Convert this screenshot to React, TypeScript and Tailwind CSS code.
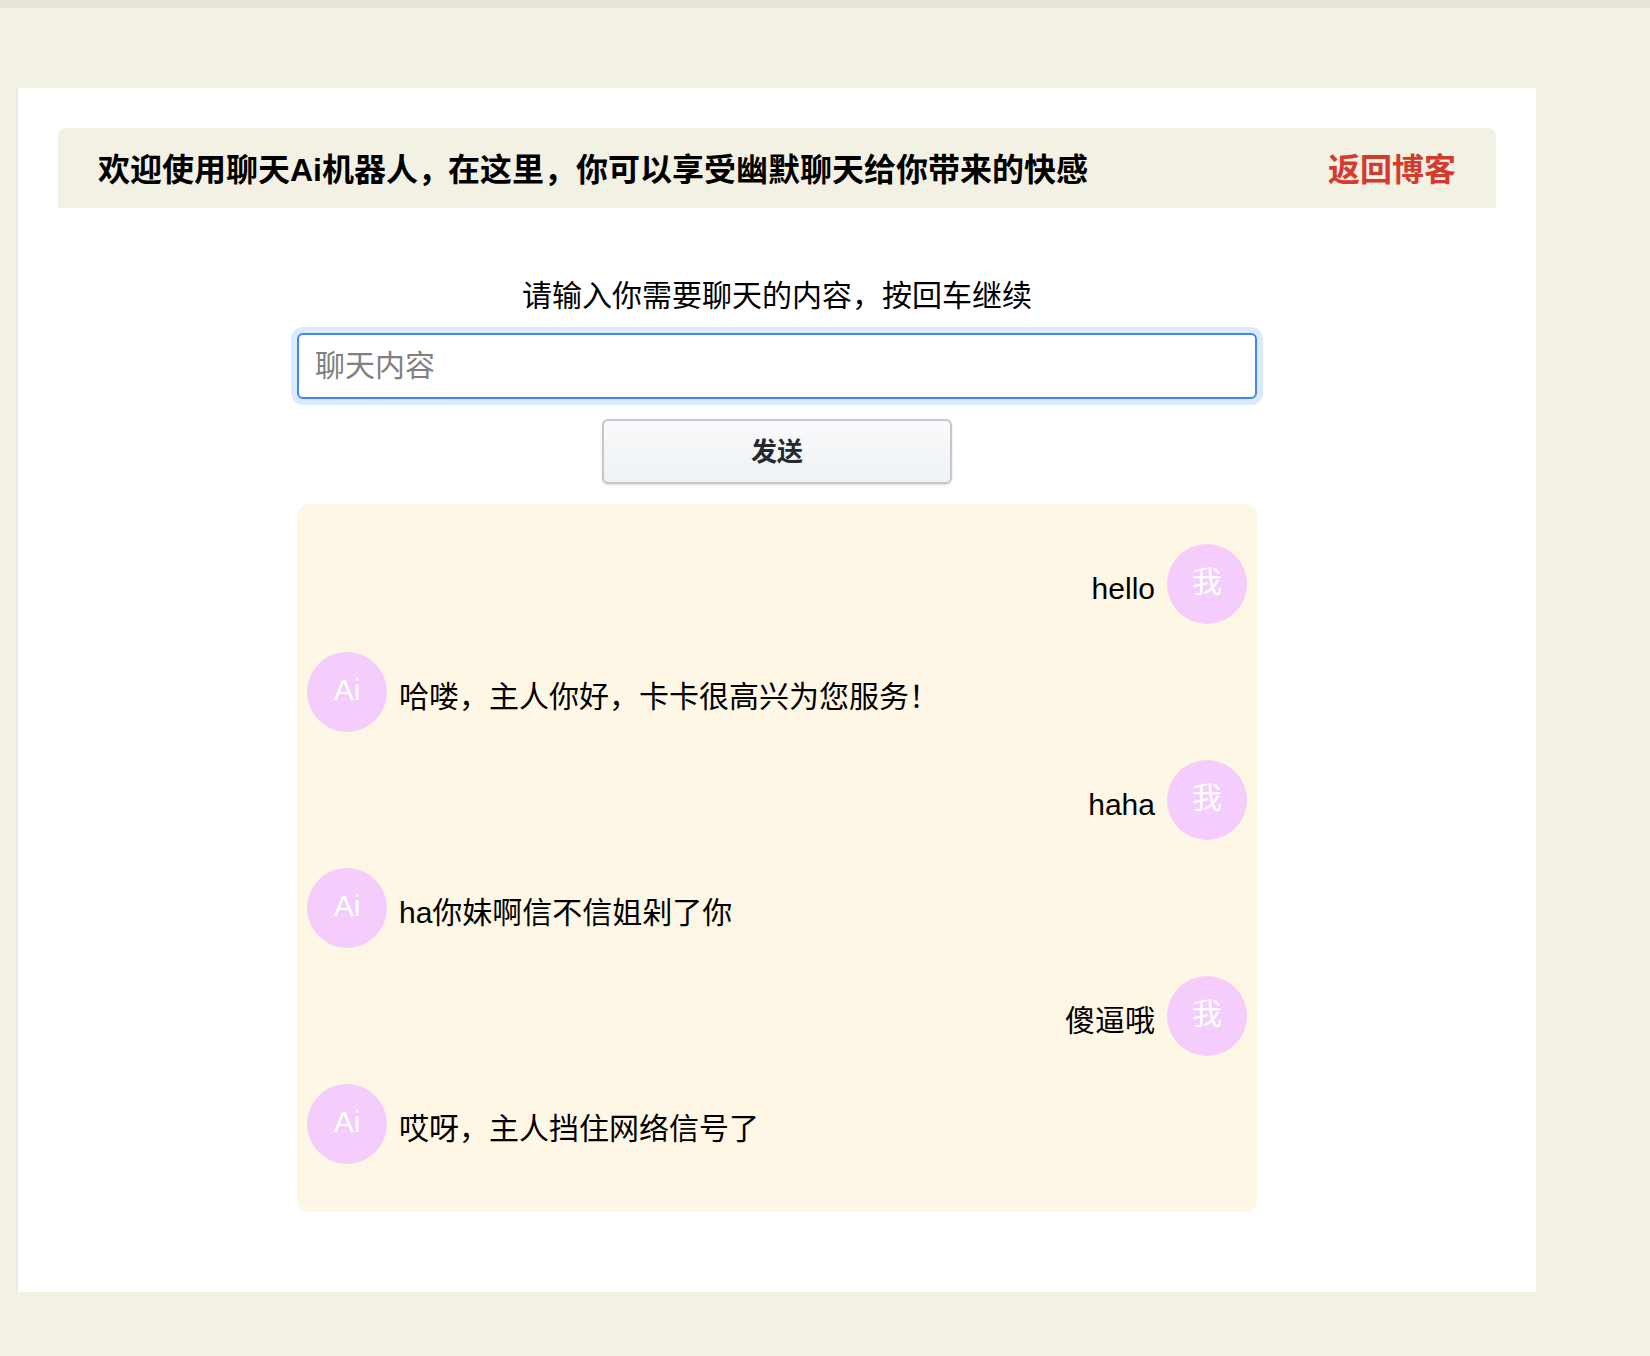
const font = { fontFamily: '"Liberation Sans", "Noto Sans CJK SC", sans-serif' };

function Avatar({ label }: { label: string }) {
  return (
    <div className="w-20 h-20 shrink-0 rounded-full bg-[#f5cdfc] text-white text-[30px] leading-[76px] text-center">
      {label}
    </div>
  );
}

function Me({ text }: { text: string }) {
  return (
    <div className="flex justify-end items-start gap-3 h-20">
      <span className="text-[30px] leading-[45px] mt-[22px] text-black">{text}</span>
      <Avatar label="我" />
    </div>
  );
}

function Bot({ text }: { text: string }) {
  return (
    <div className="flex justify-start items-start gap-3 h-20">
      <Avatar label="Ai" />
      <span className="text-[30px] leading-[45px] mt-[22px] text-black">{text}</span>
    </div>
  );
}

export default function App() {
  return (
    <div className="min-h-[1356px] bg-[#f3f0e4]" style={font}>
      <div className="h-2 bg-[#e5e5da]" />
      <div className="ml-4 mt-20 w-[1520px] h-[1204px] bg-white border-l-2 border-[#ecebdf] p-10">
        <div className="h-20 bg-[#f3f0e4] rounded-t-lg px-10 pt-1 flex items-center justify-between">
          <h1 className="text-[32px] font-bold text-black">
            欢迎使用聊天Ai机器人<span className="tracking-[-2px]">，</span>在这里，你可以享受幽默聊天给你带来的快感
          </h1>
          <a className="text-[32px] font-bold text-[#d33b2f]">返回博客</a>
        </div>
        <div className="w-[960px] mx-auto mt-[65px]">
          <p className="text-[30px] leading-[45px] text-center text-black">请输入你需要聊天的内容，按回车继续</p>
          <input
            readOnly
            placeholder="聊天内容"
            className="block w-full h-[66px] mt-[15px] px-4 border-2 border-[#4285f4] rounded-md ring-[6px] ring-[#dbeafe] text-[30px] outline-none placeholder:text-[#808080] bg-white"
          />
          <button className="block mx-auto mt-5 w-[350px] h-[65px] pt-[2px] border-2 border-[#c3c8ce] rounded-md bg-gradient-to-b from-[#f9fafb] to-[#eef2f5] text-[26px] font-bold text-[#24292f] shadow-sm">
            发送
          </button>
          <div className="mt-5 h-[708px] bg-[#fef7e5] rounded-xl px-[10px] pt-10 flex flex-col gap-7">
            <Me text="hello" />
            <Bot text="哈喽，主人你好，卡卡很高兴为您服务！" />
            <Me text="haha" />
            <Bot text="ha你妹啊信不信姐剁了你" />
            <Me text="傻逼哦" />
            <Bot text="哎呀，主人挡住网络信号了" />
          </div>
        </div>
      </div>
    </div>
  );
}
